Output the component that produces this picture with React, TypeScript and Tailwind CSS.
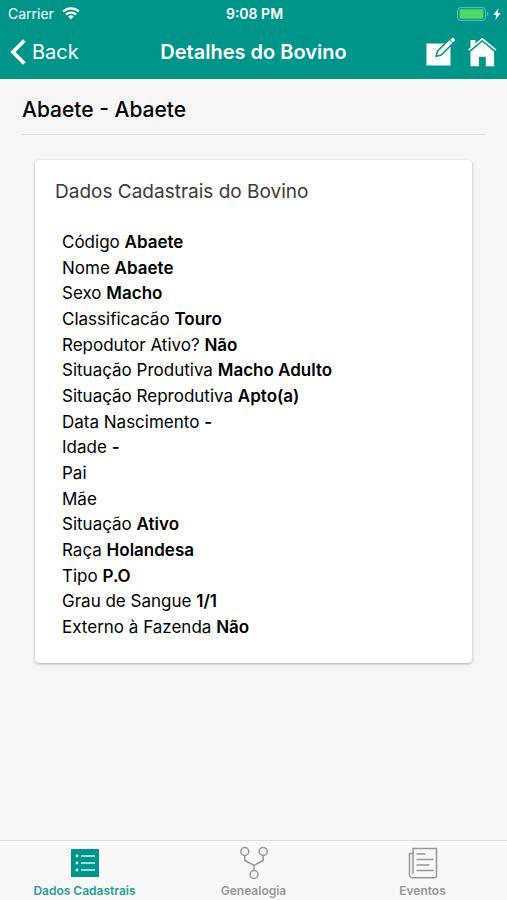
import type { ReactNode } from "react";

const fields: { label: string; value?: string }[] = [
  { label: "Código", value: "Abaete" },
  { label: "Nome", value: "Abaete" },
  { label: "Sexo", value: "Macho" },
  { label: "Classificacão", value: "Touro" },
  { label: "Repodutor Ativo?", value: "Não" },
  { label: "Situação Produtiva", value: "Macho Adulto" },
  { label: "Situação Reprodutiva", value: "Apto(a)" },
  { label: "Data Nascimento", value: "-" },
  { label: "Idade", value: "-" },
  { label: "Pai" },
  { label: "Mãe" },
  { label: "Situação", value: "Ativo" },
  { label: "Raça", value: "Holandesa" },
  { label: "Tipo", value: "P.O" },
  { label: "Grau de Sangue", value: "1/1" },
  { label: "Externo à Fazenda", value: "Não" },
];

function StatusBar() {
  return (
    <div className="grid grid-cols-[1fr_auto_1fr] items-center h-7 pl-2 pr-1.5 text-sm">
      <div className="flex items-center gap-2">
        <span>Carrier</span>
        <svg width="18" height="14" viewBox="0 0 18 14" fill="none" stroke="currentColor" strokeWidth="2.3" aria-hidden="true">
          <path d="M1.2 4.5a11.2 11.2 0 0 1 15.6 0" />
          <path d="M4 7.7a7.2 7.2 0 0 1 10 0" />
          <path d="M9 12.4 6.2 9.6a4 4 0 0 1 5.6 0z" fill="currentColor" stroke="none" />
        </svg>
      </div>
      <span className="font-semibold">9:08 PM</span>
      <div className="flex items-center justify-end gap-1">
        <svg width="32" height="14" viewBox="0 0 32 14" aria-hidden="true">
          <rect x="0.6" y="0.6" width="28" height="12.8" rx="3" fill="none" stroke="#66bfb8" />
          <rect x="2.5" y="2.3" width="24" height="9.4" rx="1.2" fill="#4cd964" />
          <path d="M30 5v4q1.6-.6 1.6-2T30 5z" fill="#66bfb8" />
        </svg>
        <svg width="8" height="12" viewBox="0 0 8 12" fill="currentColor" aria-hidden="true">
          <path d="M5.6 0 .4 6.9h2.9L2.4 12l5.2-7.1H4.7z" />
        </svg>
      </div>
    </div>
  );
}

function NavBar() {
  return (
    <div className="grid grid-cols-[1fr_auto_1fr] items-center h-[51px] px-2.5 pb-1">
      <button type="button" className="flex items-center gap-1.5 text-xl justify-self-start">
        <svg width="16" height="26" viewBox="0 0 16 26" fill="none" stroke="currentColor" strokeWidth="3.8" aria-hidden="true">
          <path d="M14.3 1.5 3 13l11.3 11.5" />
        </svg>
        Back
      </button>
      <h1 className="text-xl font-semibold">Detalhes do Bovino</h1>
      <div className="flex items-center justify-end gap-3">
        <button type="button" aria-label="Editar">
          <svg width="30" height="30" viewBox="0 0 30 30" aria-hidden="true">
            <path d="M.5 6.5h24v22H.5z" fill="currentColor" />
            {/* pencil, with a rim that cuts it out of the sheet */}
            <path d="M10.2 19.2l1.2-5L24.2 1.4l3.8 3.8L15.2 18z" fill="currentColor" stroke="#00958a" strokeWidth="1.5" />
            <path d="M24.5 2.7l1.6-1.6q.6-.5 1.2 0l1.4 1.4q.5.6 0 1.2l-1.6 1.6z" fill="currentColor" />
            <path d="M23.3 2.6l3.6 3.6" stroke="#00958a" strokeWidth="0.9" />
          </svg>
        </button>
        <button type="button" aria-label="Início">
          <svg width="29" height="30" viewBox="0 0 29 30" fill="currentColor" aria-hidden="true">
            <path d="M2.5 3h5v4.2l-5 4.4z" />
            <path d="M.6 13.2 14.3 1.8 28 13.2" fill="none" stroke="currentColor" strokeWidth="1.6" />
            <path d="M14.3 4.8 2.5 14.8v14.4H11v-9.4h6.8v9.4h8.3V14.8z" />
          </svg>
        </button>
      </div>
    </div>
  );
}

function TabItem({ label, active = false, children }: { label: string; active?: boolean; children: ReactNode }) {
  return (
    <a
      href="#"
      aria-current={active ? "page" : undefined}
      className={`flex flex-col items-center gap-0.5 pt-1 text-xs font-semibold ${
        active ? "text-[#259f95]" : "text-[#979797]"
      }`}
    >
      {children}
      {label}
    </a>
  );
}

export default function App() {
  return (
    <div className="flex min-h-screen flex-col bg-[#f6f6f6] font-['Inter',sans-serif] text-black">
      <header className="bg-[#00958a] text-white">
        <StatusBar />
        <NavBar />
      </header>

      <main className="flex-1 px-[22px] pb-6">
        <h2 className="border-b border-[#dedede] pt-[17px] pb-[11px] text-[21px] leading-[27px] font-medium">
          Abaete - Abaete
        </h2>

        <section className="mx-[13px] mt-[25px] rounded-sm bg-white px-5 pt-[18px] pb-[23px] shadow-[0_1px_3px_rgba(0,0,0,0.3)]">
          <h3 className="text-[19px] leading-7 text-[#3a3a3a]">Dados Cadastrais do Bovino</h3>
          <ul className="mt-[23px] grid min-h-[411px] auto-rows-fr items-center px-[7px] text-[17px] leading-6">
            {fields.map((field) => (
              <li key={field.label}>
                {field.label} {field.value && <b className="font-semibold">{field.value}</b>}
              </li>
            ))}
          </ul>
        </section>
      </main>

      <nav className="grid h-[60px] grid-cols-3 border-t border-[#dcdcdc] bg-[#f8f8f8]">
        <TabItem label="Dados Cadastrais" active>
          <svg width="34" height="36" viewBox="0 0 34 36" aria-hidden="true">
            <rect x="3" y="4" width="28" height="28" fill="#00958a" />
            <g fill="none" stroke="#d4efec" strokeWidth="1.6">
              <path d="M13 11h14M13 18h14M13 25h14" />
            </g>
            <g fill="#d4efec">
              <circle cx="9" cy="11" r="1.4" />
              <circle cx="9" cy="18" r="1.4" />
              <circle cx="9" cy="25" r="1.4" />
            </g>
          </svg>
        </TabItem>
        <TabItem label="Genealogia">
          <svg width="34" height="36" viewBox="0 0 34 36" fill="none" stroke="currentColor" strokeWidth="1.5" aria-hidden="true">
            <circle cx="7.8" cy="6.5" r="4" />
            <circle cx="26.2" cy="6.5" r="4" />
            <circle cx="17" cy="29.5" r="4" />
            <path d="M7.8 10.5v5L17 20.5l9.2-5v-5M17 20.5v5" />
          </svg>
        </TabItem>
        <TabItem label="Eventos">
          <svg width="34" height="36" viewBox="0 0 34 36" fill="none" stroke="currentColor" strokeWidth="1.5" aria-hidden="true">
            <path d="M7 29V3.5h23.5v27.2a2 2 0 0 1-2 2h-22a3 3 0 0 1-3-3V8.5H7" />
            <path d="M10.5 9h9M10.5 14.5h17M10.5 20h13M10.5 25.5h17" />
          </svg>
        </TabItem>
      </nav>
    </div>
  );
}
